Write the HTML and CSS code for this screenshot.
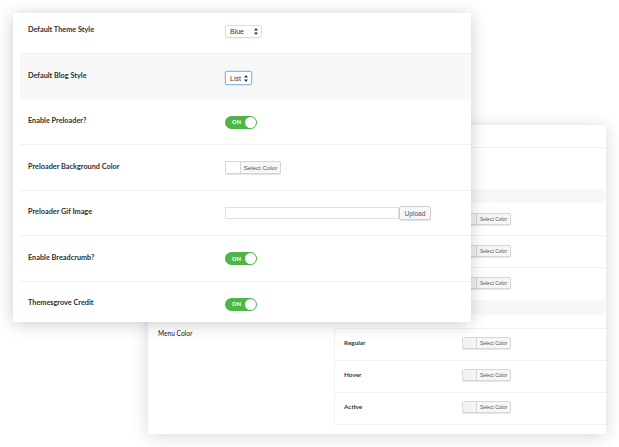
FILE: index.html
```html
<!DOCTYPE html>
<html>
<head>
<meta charset="utf-8">
<link rel="stylesheet" href="styles.css">
</head>
<body>
<div class="stage">
  <section class="card card-back">
    <div class="brow brow-a"></div>
    <div class="brow brow-b"><span class="blabel">Logo Upload</span></div>
    <div class="bband"></div>
    <div class="brow brow-c"><span class="blabel">Header Background</span><div class="bpicker"><span class="sw"></span><span class="btxt">Select Color</span></div></div>
    <div class="brow brow-d"><span class="blabel">Header Text Color</span><div class="bpicker"><span class="sw"></span><span class="btxt">Select Color</span></div></div>
    <div class="brow brow-e"><span class="blabel">Header Border Color</span><div class="bpicker"><span class="sw"></span><span class="btxt">Select Color</span></div></div>
    <div class="bband bband-2"></div>
    <div class="brow brow-f">
      <span class="blabel">Menu Color</span>
      <div class="subtable">
        <div class="subrow"><span class="sublabel">Regular</span><div class="bpicker"><span class="sw"></span><span class="btxt">Select Color</span></div></div>
        <div class="subrow"><span class="sublabel">Hover</span><div class="bpicker"><span class="sw"></span><span class="btxt">Select Color</span></div></div>
        <div class="subrow"><span class="sublabel">Active</span><div class="bpicker"><span class="sw"></span><span class="btxt">Select Color</span></div></div>
      </div>
    </div>
  </section>

  <section class="card card-front">
    <div class="rows">
      <div class="row">
        <div class="label">Default Theme Style</div>
        <div class="ctrl"><div class="select sel-blue"><span>Blue</span><svg class="arr" viewBox="0 0 4 7" width="4" height="7"><path d="M2 0L4 2.6H0Z M2 7L4 4.4H0Z" fill="#333"/></svg></div></div>
      </div>
      <div class="row row-grey">
        <div class="label">Default Blog Style</div>
        <div class="ctrl"><div class="select sel-list"><span>List</span><svg class="arr" viewBox="0 0 4 7" width="4" height="7"><path d="M2 0L4 2.6H0Z M2 7L4 4.4H0Z" fill="#333"/></svg></div></div>
      </div>
      <div class="row">
        <div class="label">Enable Preloader?</div>
        <div class="ctrl"><div class="toggle"><span class="on">ON</span><span class="knob"></span></div></div>
      </div>
      <div class="row">
        <div class="label">Preloader Background Color</div>
        <div class="ctrl"><div class="picker"><span class="sw"></span><span class="ptxt">Select Color</span></div></div>
      </div>
      <div class="row">
        <div class="label">Preloader Gif Image</div>
        <div class="ctrl ctrl-upload"><div class="input"></div><div class="btn">Upload</div></div>
      </div>
      <div class="row">
        <div class="label">Enable Breadcrumb?</div>
        <div class="ctrl"><div class="toggle"><span class="on">ON</span><span class="knob"></span></div></div>
      </div>
      <div class="row">
        <div class="label">Themesgrove Credit</div>
        <div class="ctrl"><div class="toggle"><span class="on">ON</span><span class="knob"></span></div></div>
      </div>
    </div>
  </section>
</div>
</body>
</html>
```

FILE: styles.css
```css
* { box-sizing: border-box; }
html, body { margin: 0; padding: 0; background: #fff; }
body {
  font-family: "Lato", "Liberation Sans", sans-serif;
  color: #23282d;
  width: 619px;
  height: 447px;
  overflow: hidden;
}
.stage { position: relative; width: 619px; height: 447px; }

.card {
  position: absolute;
  width: 458px;
  height: 309px;
  background: #fff;
  overflow: hidden;
}
.card-front {
  left: 13px;
  top: 13px;
  z-index: 2;
  padding-left: 7px;
  box-shadow: 0 2px 16px rgba(0, 0, 0, 0.2);
}
.card-back {
  left: 148px;
  top: 125px;
  z-index: 1;
  box-shadow: 0 2px 16px rgba(0, 0, 0, 0.16);
}

/* front card */
.rows { margin-top: -4.5px; }
.row {
  height: 45.5px;
  display: flex;
  align-items: flex-start;
  border-bottom: 1px solid #f1f1f1;
  padding-left: 8px;
}
.row-grey { background: #f8f8f8; border-bottom-color: #f8f8f8; }
.label {
  width: 197px;
  flex: none;
  font-size: 7.3px;
  font-weight: 700;
  line-height: 9px;
  padding-top: 16.5px;
  color: #2b2f33;
}
.ctrl { padding-top: 16px; display: flex; align-items: center; }

.select {
  height: 13px;
  border: 1px solid #dcdcdc;
  border-radius: 2px;
  background: #fff;
  display: flex;
  align-items: center;
  justify-content: space-between;
  padding: 0 3px 0 4px;
  font-size: 7px;
  color: #333;
  font-family: "Liberation Sans", sans-serif;
  box-shadow: 0 1px 1px rgba(0,0,0,0.04);
}
.sel-blue { width: 37px; margin-top: 0.5px; }
.sel-list {
  width: 27px;
  height: 14px;
  border-color: #8cb9e3;
  box-shadow: 0 0 2px rgba(91, 157, 217, 0.6);
  margin-top: 1px;
}
.arr { display: block; }

.toggle {
  width: 32px;
  height: 13px;
  border-radius: 7px;
  background: #4cb648;
  position: relative;
  display: flex;
  align-items: center;
}
.toggle .on {
  font-size: 5.5px;
  font-weight: 900;
  color: #fff;
  padding-left: 7px;
  letter-spacing: 0.2px;
}
.toggle .knob {
  position: absolute;
  right: 1.5px;
  top: 1px;
  width: 11px;
  height: 11px;
  border-radius: 50%;
  background: #fff;
}

.picker {
  width: 56px;
  height: 13px;
  border: 1px solid #d5d5d5;
  border-radius: 2px;
  display: flex;
  background: #f7f7f7;
  box-shadow: 0 1px 0 #e5e5e5;
}
.picker .sw { width: 15px; background: #fff; border-right: 1px solid #d5d5d5; }
.ptxt {
  flex: 1;
  font-size: 6.2px;
  color: #555;
  display: flex;
  align-items: center;
  justify-content: center;
  font-family: "Liberation Sans", sans-serif;
}

.ctrl-upload { padding-top: 15.5px; }
.input {
  width: 174px;
  height: 12px;
  border: 1px solid #dedede;
  background: #fff;
}
.btn {
  width: 32px;
  height: 14px;
  border: 1px solid #d0d0d0;
  border-radius: 2px;
  background: #f7f7f7;
  font-size: 6.6px;
  color: #555;
  display: flex;
  align-items: center;
  justify-content: center;
  font-family: "Liberation Sans", sans-serif;
  box-shadow: 0 1px 0 #e2e2e2;
}

/* back card */
.brow {
  display: flex;
  align-items: flex-start;
  border-bottom: 1px solid #f1f1f1;
  padding-left: 10px;
}
.brow-a { height: 23px; }
.brow-b { height: 41px; border-bottom: none; padding-top: 8px; }
.brow-c { height: 33px; padding-top: 10px; }
.brow-d, .brow-e { height: 32px; padding-top: 9px; }
.brow-e { border-bottom: none; }
.bband { height: 14px; background: #f8f8f8; }
.bband-2 { height: 15px; }
.brow-f { height: 119px; padding-top: 13px; border-bottom: none; }
.blabel {
  width: 176px;
  flex: none;
  font-size: 6.6px;
  font-weight: 400;
  color: #222;
  line-height: 8px;
}
.brow-c .blabel, .brow-d .blabel, .brow-e .blabel { width: 304px; }
.brow-f .blabel { padding-top: 1px; }

.bpicker {
  width: 49px;
  height: 12px;
  border: 1px solid #d8d8d8;
  border-radius: 2px;
  display: flex;
  background: #f7f7f7;
  box-shadow: 0 1px 0 #e6e6e6;
  flex: none;
}
.bpicker .sw { width: 14px; background: #f3f3f3; border-right: 1px solid #d8d8d8; }
.btxt {
  flex: 1;
  font-size: 5px;
  color: #555;
  display: flex;
  align-items: center;
  justify-content: center;
  font-family: "Liberation Sans", sans-serif;
}

.subtable {
  flex: 1;
  border: 1px solid #f1f1f1;
  border-right: none;
}
.subrow {
  height: 32px;
  display: flex;
  align-items: flex-start;
  padding-top: 8px;
  padding-left: 9px;
  border-bottom: 1px solid #f1f1f1;
}
.subrow:last-child { border-bottom: none; height: 31px; }
.sublabel {
  width: 118px;
  flex: none;
  font-size: 6.4px;
  font-weight: 700;
  color: #30343a;
  line-height: 8px;
  padding-top: 2px;
}
```
